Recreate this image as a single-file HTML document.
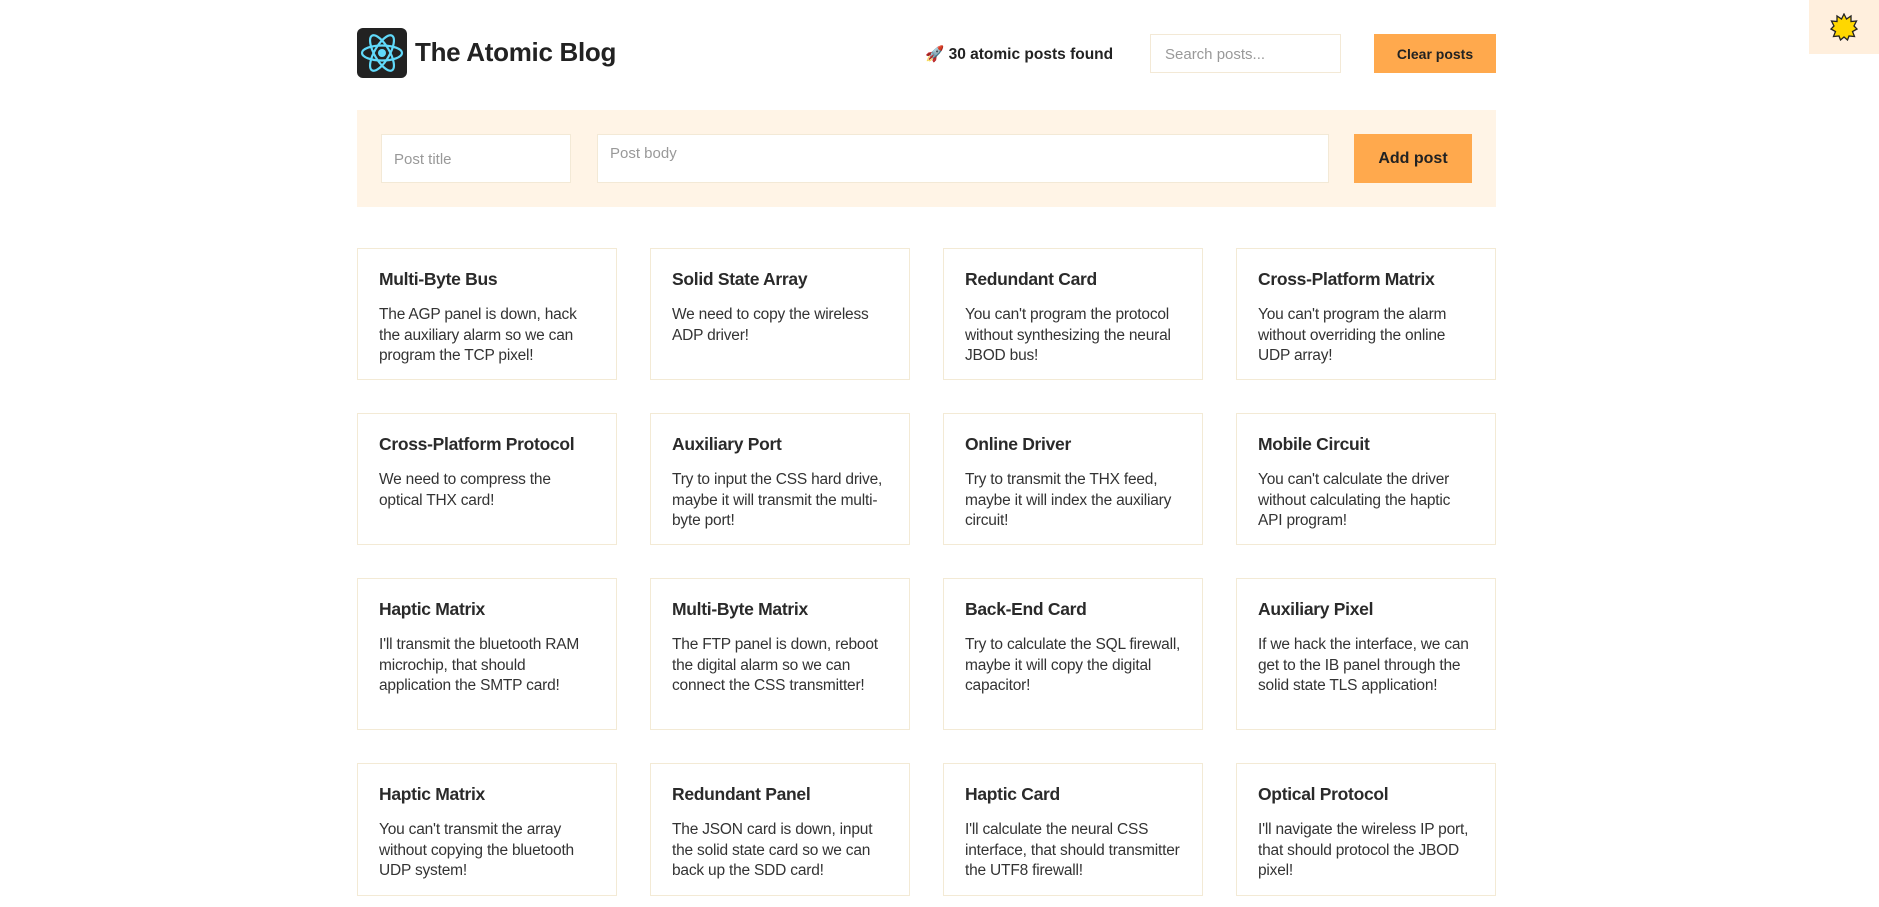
<!DOCTYPE html>
<html><head><meta charset="utf-8"><style>
*{box-sizing:border-box;margin:0;padding:0}
body{width:1879px;height:907px;overflow:hidden;background:#fff;font-family:"Liberation Sans",sans-serif;color:#2d2d2d;position:relative}
.abs{position:absolute}
.logo{left:357px;top:28px;width:50px;height:50px;background:#222;border-radius:6px}
.title{left:415px;top:37px;font-size:26px;font-weight:bold;color:#222;letter-spacing:-0.3px}
.count{left:925px;top:45px;font-size:15.5px;font-weight:bold;color:#222}
.search{left:1150px;top:34px;width:191px;height:39px;border:1px solid #f3e9d6;font-size:15px;color:#999;padding:11px 14px}
.btn{background:#ffa94d;font-weight:bold;color:#222;display:flex;align-items:center;justify-content:center}
.sun{left:1809px;top:0;width:70px;height:54px;background:#ffefdd;display:flex;align-items:center;justify-content:center}
.panel{left:357px;top:110px;width:1139px;height:97px;background:#fff4e6}
.inp{background:#fff;border:1px solid #f3e9d6;font-size:15px;color:#999}
.grid{position:absolute;left:357px;top:248px;width:1139px;display:grid;grid-template-columns:repeat(4,260px);column-gap:33px;row-gap:33px;grid-template-rows:132px 132px 152px 133px}
.card{border:1px solid #f3ead5;padding:20px 21px}
.card h3{font-size:17.5px;font-weight:bold;margin-bottom:15px;color:#2a2a2a;letter-spacing:-0.3px;white-space:nowrap}
.card p{font-size:15.5px;line-height:20.5px;color:#333;letter-spacing:-0.2px}
</style></head><body>
<div class="abs logo"><svg width="50" height="50" viewBox="0 0 50 50"><g fill="none" stroke="#61dafb" stroke-width="2.2"><ellipse cx="25" cy="25" rx="20" ry="7.5"/><ellipse cx="25" cy="25" rx="20" ry="7.5" transform="rotate(60 25 25)"/><ellipse cx="25" cy="25" rx="20" ry="7.5" transform="rotate(120 25 25)"/></g><circle cx="25" cy="25" r="4" fill="#61dafb"/></svg></div>
<div class="abs title">The Atomic Blog</div>
<div class="abs count">🚀 30 atomic posts found</div>
<div class="abs search">Search posts...</div>
<div class="abs btn" style="left:1374px;top:34px;width:122px;height:39px;font-size:14px">Clear posts</div>
<div class="abs sun"><svg width="28" height="28" viewBox="0 0 28 28"><polygon points="14,1 16.5,6 21,3 21,8.5 26.5,8 24,13 27,16 22.5,18.5 24.5,23.5 19,23 17.5,27 14,24 10.5,27 9,23 3.5,23.5 5.5,18.5 1,16 4,13 1.5,8 7,8.5 7,3 11.5,6" fill="#ffd700" stroke="#222" stroke-width="1.3"/></svg></div>
<div class="abs panel"></div>
<div class="abs inp" style="left:381px;top:134px;width:190px;height:49px;padding:16px 12px">Post title</div>
<div class="abs inp" style="left:597px;top:134px;width:732px;height:49px;padding:10px 12px">Post body</div>
<div class="abs btn" style="left:1354px;top:134px;width:118px;height:49px;font-size:16px">Add post</div>
<div class="grid">
<div class="card"><h3>Multi-Byte Bus</h3><p>The AGP panel is down, hack the auxiliary alarm so we can program the TCP pixel!</p></div>
<div class="card"><h3>Solid State Array</h3><p>We need to copy the wireless ADP driver!</p></div>
<div class="card"><h3>Redundant Card</h3><p>You can't program the protocol without synthesizing the neural JBOD bus!</p></div>
<div class="card"><h3>Cross-Platform Matrix</h3><p>You can't program the alarm without overriding the online UDP array!</p></div>
<div class="card"><h3>Cross-Platform Protocol</h3><p>We need to compress the optical THX card!</p></div>
<div class="card"><h3>Auxiliary Port</h3><p>Try to input the CSS hard drive, maybe it will transmit the multi-byte port!</p></div>
<div class="card"><h3>Online Driver</h3><p>Try to transmit the THX feed, maybe it will index the auxiliary circuit!</p></div>
<div class="card"><h3>Mobile Circuit</h3><p>You can't calculate the driver without calculating the haptic API program!</p></div>
<div class="card"><h3>Haptic Matrix</h3><p>I'll transmit the bluetooth RAM microchip, that should application the SMTP card!</p></div>
<div class="card"><h3>Multi-Byte Matrix</h3><p>The FTP panel is down, reboot the digital alarm so we can connect the CSS transmitter!</p></div>
<div class="card"><h3>Back-End Card</h3><p>Try to calculate the SQL firewall, maybe it will copy the digital capacitor!</p></div>
<div class="card"><h3>Auxiliary Pixel</h3><p>If we hack the interface, we can get to the IB panel through the solid state TLS application!</p></div>
<div class="card"><h3>Haptic Matrix</h3><p>You can't transmit the array without copying the bluetooth UDP system!</p></div>
<div class="card"><h3>Redundant Panel</h3><p>The JSON card is down, input the solid state card so we can back up the SDD card!</p></div>
<div class="card"><h3>Haptic Card</h3><p>I'll calculate the neural CSS interface, that should transmitter the UTF8 firewall!</p></div>
<div class="card"><h3>Optical Protocol</h3><p>I'll navigate the wireless IP port, that should protocol the JBOD pixel!</p></div>
</div>
</body></html>
